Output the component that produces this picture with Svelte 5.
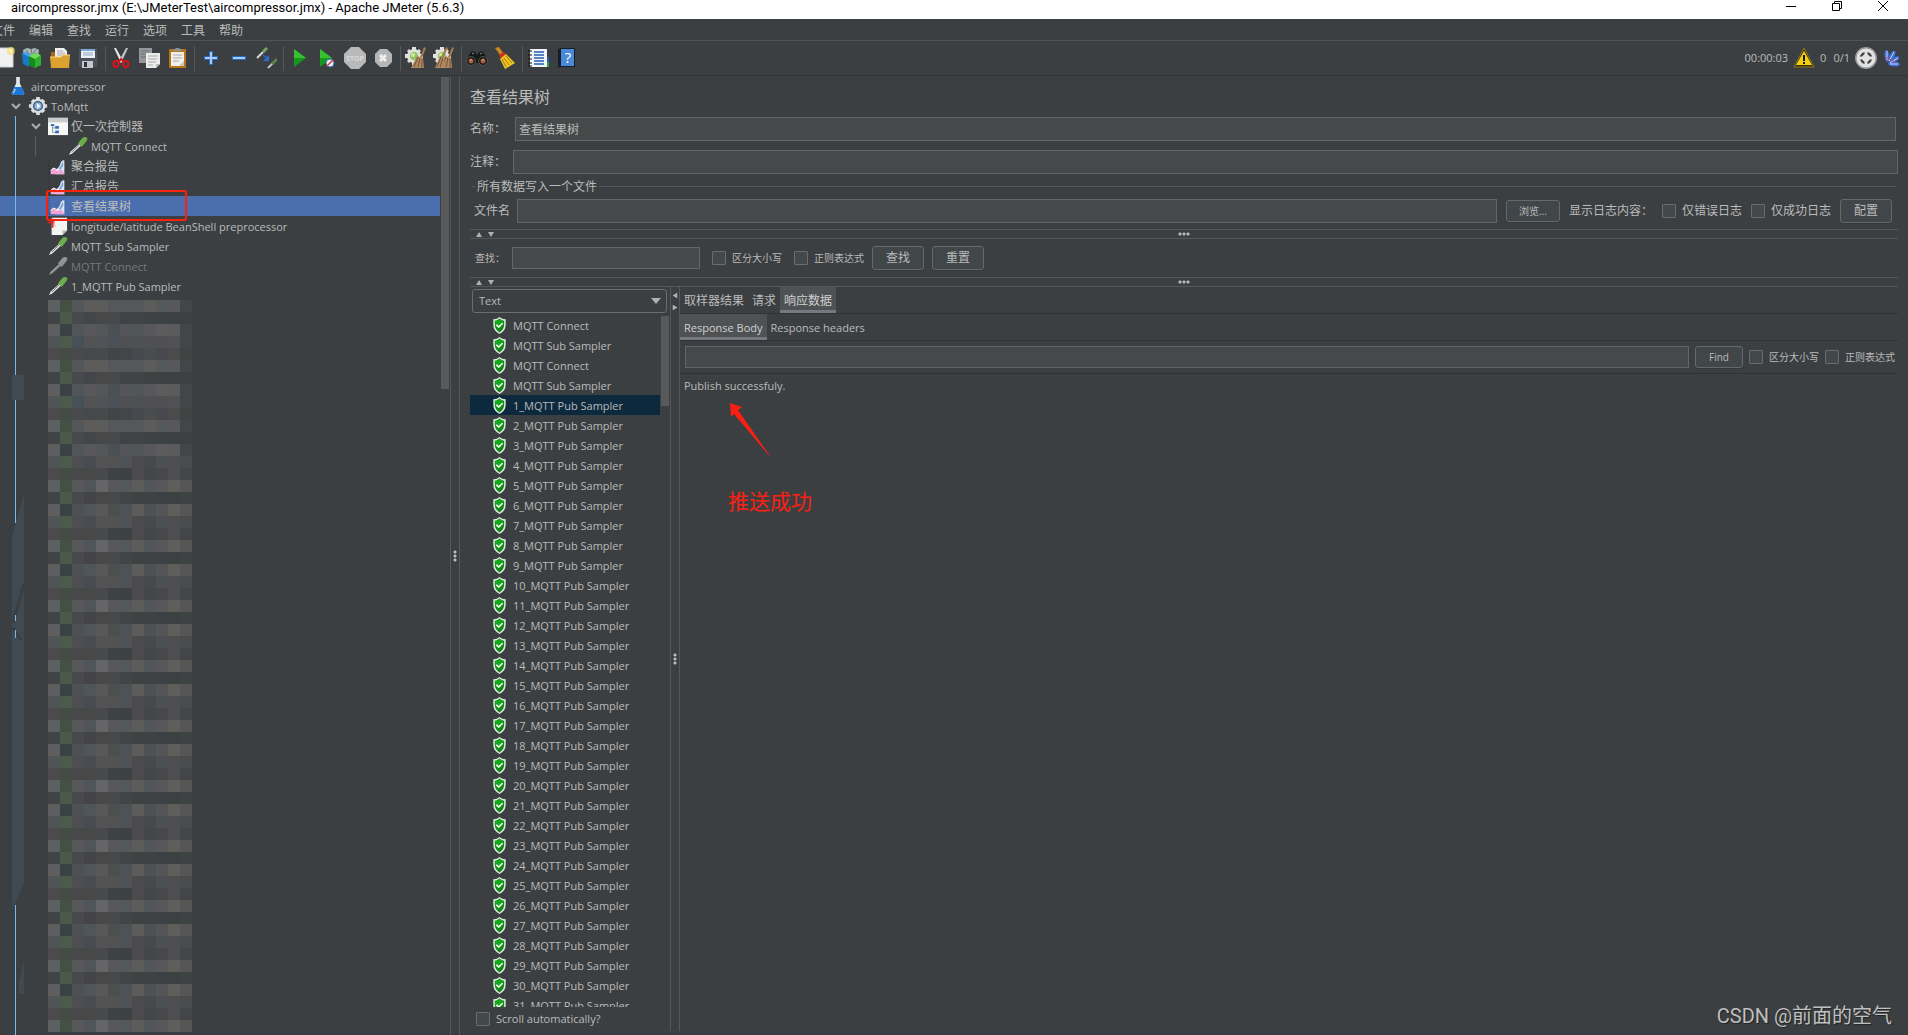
<script lang="ts">
  type TreeNode = {
    label: string;
    icon: string;
    depth: number;
    open?: boolean;
    dim?: boolean;
    zh?: boolean;
  };

  const menus = ['文件', '编辑', '查找', '运行', '选项', '工具', '帮助'];

  const toolGroups = [
    ['new', 'templates', 'open', 'save'],
    ['cut', 'copy', 'paste'],
    ['plus', 'minus', 'toggle'],
    ['start', 'startNoTimers', 'stop', 'shutdown'],
    ['clear', 'clearAll'],
    ['search', 'broom'],
    ['list', 'help']
  ];

  const tree: TreeNode[] = [
    { label: 'aircompressor', icon: 'flask', depth: 0 },
    { label: 'ToMqtt', icon: 'gear', depth: 1, open: true },
    { label: '仅一次控制器', icon: 'controller', depth: 2, open: true, zh: true },
    { label: 'MQTT Connect', icon: 'pipette', depth: 3 },
    { label: '聚合报告', icon: 'chart', depth: 2, zh: true },
    { label: '汇总报告', icon: 'chart', depth: 2, zh: true },
    { label: '查看结果树', icon: 'chart', depth: 2, zh: true },
    { label: 'longitude/latitude BeanShell preprocessor', icon: 'pre', depth: 2 },
    { label: 'MQTT Sub Sampler', icon: 'pipette', depth: 2 },
    { label: 'MQTT Connect', icon: 'pipetteOff', depth: 2, dim: true },
    { label: '1_MQTT Pub Sampler', icon: 'pipette', depth: 2 }
  ];

  const results = [
    'MQTT Connect',
    'MQTT Sub Sampler',
    'MQTT Connect',
    'MQTT Sub Sampler',
    ...Array.from({ length: 31 }, (_, i) => `${i + 1}_MQTT Pub Sampler`)
  ];

  // hidden tree rows, five mosaic lines per three rows
  const mosaicTop = [
    '5d6061 455045 53575a 5e5c5b 5c5d5a 54585a 565759 54585a 5c5d5a 56595a 58585b 434648',
    '414445 4b584a 464a4d 434548 494849 464a4c 3f4346 404445 3f4243 3d4143 3c4040 3c4041',
    '5e5e60 3b4243 50555a 58585a 54565a 4b5054 54555a 505557 58585a 5c5c5e 5b5b5c 434648',
    '515455 4b5a4a 485057 535355 515356 4b5157 4e5052 4d5152 4e5051 505052 515154 434648',
    '4b4b4d 444a44 484a4b 46494c 47494b 414546 444548 46494d 4b4c4e 48494c 4b4b4c 3f4344'
  ];
  const mosaicRest = [
    '5d6061 455045 58585a 505559 646567 58585b 54585b 5c5d5a 50565a 58585b 5e5e5b 565657',
    '414445 4b584a 464a4d 444446 494849 464a4c 414546 3e4242 3f4243 3d4143 3c4040 3e4242',
    '5e5e60 3b4243 4d5153 50555a 58585a 4b504f 4d5254 5c5d5a 4d5153 555558 5e5e5b 565657',
    '515455 4b5a4a 4e4e50 484c50 535355 525253 4e5254 4b4b4d 464a4d 4d5052 4e4e50 494c4d',
    '4b4b4d 444a44 46484a 484849 47494c 3e4243 3c4143 4b4b4d 444749 48484a 4e4e50 434648'
  ];
  const mosaic = Array.from({ length: 61 }, (_, r) =>
    (r < 13 ? mosaicTop : mosaicRest)[r % 5].split(' ')
  );

  let selectedNode = $state(6);
  let selectedResult = $state(4);
  let tab = $state('响应数据');
  let subTab = $state('Response Body');
</script>

{#snippet icon(name: string)}
  <svg class="icon" viewBox="0 0 22 22" aria-hidden="true">
    {#if name === 'new'}
      <path d="M3 1h17v19H3z" fill="#f1f1f1" stroke="#cfcfcf" />
      <circle cx="18" cy="4" r="4" fill="#f2dc5a" opacity=".6" />
      <circle cx="18" cy="4" r="2" fill="#fff6a8" />
    {:else if name === 'templates'}
      <path d="M2 3l4-2 4 1 4-1 4 2-1 7H3z" fill="#aab5b9" />
      <path d="M5 3l3 4M10 2l1 5M15 2l-3 5" stroke="#667276" />
      <path d="M1 6l7 3v11l-6-3z" fill="#1878c8" />
      <path d="M1 6l4-1 6 3-3 2z" fill="#48a2e8" />
      <path d="M8 9l7-3 5 3v9l-6 3-6-3z" fill="#2db22d" />
      <path d="M8 9l6 3v9l-6-3z" fill="#168a20" />
      <path d="M8 9l6-3 6 2-6 4z" fill="#72db5a" />
    {:else if name === 'open'}
      <path d="M2 5h6l2 2h9v12H2z" fill="#a56b14" />
      <path d="M6 1h9l3 3v9H6z" fill="#f0f0f0" />
      <path d="M8 4h6M8 6h8M8 8h8" stroke="#aaa" />
      <path d="M1 10h11l2-2h7l-1 13H2z" fill="#dca231" />
      <path d="M1 10h11l2-2h7" stroke="#f9cf70" fill="none" />
    {:else if name === 'save'}
      <path d="M2 1h18l1 1v18l-1 1H3l-2-2V2z" fill="#4b5158" stroke="#343a40" />
      <path d="M4 2h14v9H4z" fill="#e8f0f8" />
      <path d="M4 2h14v2H4z" fill="#7ea9d6" />
      <path d="M6 6h10M6 8h10" stroke="#9ab" />
      <path d="M5 14h11v7H5z" fill="#c5c9cc" />
      <path d="M7 15h3v5H7z" fill="#30343a" />
    {:else if name === 'cut'}
      <path d="M4 1l2 0 7 13-2 2z" fill="#e8e8e8" />
      <path d="M18 1l-2 0-7 13 2 2z" fill="#c7c7c7" />
      <g fill="none" stroke="#d8141c" stroke-width="2">
        <ellipse cx="6" cy="17" rx="2.6" ry="3" />
        <ellipse cx="16" cy="17" rx="2.6" ry="3" />
        <path d="M8 15l3-3 3 3" />
      </g>
    {:else if name === 'copy'}
      <path d="M1 1h13v15H1z" fill="#949799" />
      <path d="M3 4h8M3 7h5M3 10h5" stroke="#6d7072" />
      <path d="M8 6h14v11l-4 4H8z" fill="#ececea" />
      <path d="M10 9h10M10 12h9M10 15h8M10 18h5" stroke="#a9a9a9" />
      <path d="M22 17h-4v4z" fill="#b9b9b9" />
    {:else if name === 'paste'}
      <rect x="3" y="2" width="17" height="19" rx="1" fill="#b87416" />
      <path d="M5 5h13v14H5z" fill="#f0f0ee" />
      <path d="M7 4h9V2h-2l-1-1h-3L9 2H7z" fill="#8e9193" />
      <path d="M7 8h9M7 11h9M7 14h6" stroke="#aaa" />
      <path d="M18 14l-5 5h5z" fill="#c4c4c0" />
    {:else if name === 'plus'}
      <path d="M10 4h4v5h5v4h-5v5h-4v-5H5V9h5z" fill="#2b67b8" />
      <path d="M11 5h2v5h5v2h-5v5h-2v-5H6v-2h5z" fill="#a9cdf5" />
    {:else if name === 'minus'}
      <path d="M5 9h14v4H5z" fill="#2b67b8" />
      <path d="M6 10h12v2H6z" fill="#a9cdf5" />
    {:else if name === 'toggle'}
      <path d="M2 11l6-6" stroke="#d9d9d9" stroke-width="2" />
      <path d="M8 5l4-4" stroke="#70a758" stroke-width="3" />
      <path d="M13 21l5-5" stroke="#c3c3c3" stroke-width="2" />
      <path d="M17 17l5-5" stroke="#5c8249" stroke-width="3" />
      <path d="M8 8l5 4" stroke="#2a6cd8" stroke-width="1.5" />
      <path d="M14 8v6H8z" fill="#2a6cd8" />
    {:else if name === 'start'}
      <path d="M6 2l12 9-12 9z" fill="#14991b" />
      <path d="M6 2l12 9H6z" fill="#38bf32" />
    {:else if name === 'startNoTimers'}
      <path d="M4 2l12 9-12 9z" fill="#14991b" />
      <path d="M4 2l12 9H4z" fill="#38bf32" />
      <circle cx="14" cy="16" r="4" fill="#e9eef5" stroke="#3473c0" />
      <path d="M11 19l6-6" stroke="#d83228" stroke-width="1.5" />
    {:else if name === 'stop'}
      <path d="M7 0h8l7 7v8l-7 7H7l-7-7V7z" fill="#b9b9b9" />
      <text x="11" y="14" text-anchor="middle" font-size="7" font-weight="700" fill="#dadada">STOP</text>
    {:else if name === 'shutdown'}
      <path d="M8 2h7l5 5v8l-5 5H8l-5-5V7z" fill="#b6b6b6" />
      <path d="M8 8l6 6M14 8l-6 6" stroke="#eee" stroke-width="3" />
    {:else if name === 'clear' || name === 'clearAll'}
      <g fill="#dfe1df">
        <circle cx="9" cy="9" r="7" />
        <path d="M7 0h4v18H7zM0 7h18v4H0zM2 4l2-2 12 12-2 2zM14 2l2 2L4 16l-2-2z" />
      </g>
      <circle cx="9" cy="9" r="4" fill="#8fc35e" />
      <circle cx="8" cy="8" r="2" fill="#c9eb9c" />
      <path d="M19 0l2 1-4 10-2-1z" fill="#a37850" />
      <path d="M12 9l6 2 1 10H6z" fill="#b28b62" />
      <path d="M13 10l-4 10M15 11l-2 9M17 12v9" stroke="#755234" />
      {#if name === 'clearAll'}
        <path d="M13 0l2 1-5 10-2-1z" fill="#a37850" />
        <path d="M7 9l5 2-2 10H2z" fill="#b28b62" />
        <path d="M8 10l-4 10M10 11l-3 9" stroke="#755234" />
      {/if}
    {:else if name === 'search'}
      <path d="M3 8l3-4 4 2 1 3 1-3 4-2 3 4 3 8H0z" fill="#171717" />
      <circle cx="5" cy="14" r="4.5" fill="#1b1b1b" stroke="#555" />
      <circle cx="17" cy="14" r="4.5" fill="#1b1b1b" stroke="#555" />
      <circle cx="5" cy="14" r="2.5" fill="#a65b39" />
      <circle cx="17" cy="14" r="2.5" fill="#a65b39" />
      <path d="M4 13h2M16 13h2" stroke="#e9b490" />
      <path d="M6 6l2 1M16 6l-2 1" stroke="#999" />
    {:else if name === 'broom'}
      <path d="M1 1l4-1 4 6-3 2z" fill="#c98622" />
      <path d="M5 8l5-3 2 3-5 4z" fill="#d52c1d" />
      <path d="M6 12l6-5 9 9-10 6z" fill="#edc523" />
      <path d="M8 12l4 8M10 11l5 7M12 9l6 7" stroke="#a87a0c" />
    {:else if name === 'list'}
      <path d="M3 2h17v18H3z" fill="#f1f4f8" />
      <path d="M7 5h10M7 8h10M7 11h10M7 14h10M7 17h10" stroke="#245cb0" stroke-width="1.5" />
      <path d="M1 4h4M1 8h4M1 12h4M1 16h4M1 19h4" stroke="#111" />
      <path d="M20 10h2v5h-2z" fill="#2157b8" />
      <path d="M20 15h2v5h-2z" fill="#25a834" />
    {:else if name === 'help'}
      <path d="M3 2l3-1h14v19H5l-2 1z" fill="#161c28" />
      <path d="M6 2h13v17H6z" fill="#4a88d8" />
      <text x="13" y="16" text-anchor="middle" font-size="15" fill="#fff">?</text>
    {:else if name === 'warning'}
      <path d="M11 1l10 19H1z" fill="#3b3410" stroke="#8c7a18" />
      <path d="M11 4l8 14H3z" fill="#f5cd12" />
      <path d="M10 8h2v6h-2zM10 15h2v2h-2z" fill="#191919" />
    {:else if name === 'threads'}
      <circle cx="11" cy="11" r="11" fill="#999" />
      <circle cx="11" cy="11" r="9.5" fill="#e2e2e2" />
      <circle cx="11" cy="11" r="5" fill="none" stroke="#444" stroke-width="2.5" />
      <path d="M11 4v14M4 11h14" stroke="#e2e2e2" stroke-width="3" />
    {:else if name === 'feather'}
      <g fill="#3f6fd6">
        <ellipse cx="5" cy="9" rx="2.5" ry="6" transform="rotate(-8 5 9)" />
        <ellipse cx="10" cy="9" rx="2.5" ry="6" transform="rotate(28 10 9)" />
        <ellipse cx="12" cy="13" rx="2.5" ry="6" transform="rotate(58 12 13)" />
        <ellipse cx="12" cy="17" rx="2.5" ry="6" transform="rotate(95 12 17)" />
      </g>
      <path d="M5 4v9M12 5l-5 9M16 11l-8 5M16 17H8" stroke="#c9d8f7" fill="none" />
      <path d="M3 11h3l4 2 2 3" stroke="#cf4058" fill="none" />
    {:else if name === 'flask'}
      <path d="M9 1h4v7l5 11q0 2-2 2H6q-2 0-2-2L9 8z" fill="#dfe7ee" />
      <path d="M7 12h8l3 7q0 2-2 2H6q-2 0-2-2z" fill="#1c76d4" />
      <path d="M8 14l-2 5" stroke="#9fd0ff" stroke-width="1.5" />
    {:else if name === 'gear'}
      <g fill="#dcdedf">
        <circle cx="11" cy="11" r="8" />
        <path d="M9 1h4v20H9zM1 9h20v4H1zM3 6l3-3 13 13-3 3zM16 3l3 3L6 19l-3-3z" />
      </g>
      <circle cx="11" cy="11" r="5.5" fill="#34557f" />
      <circle cx="11" cy="11" r="4" fill="#8cb2da" />
      <path d="M10 8l4 3-4 3z" fill="#f7fbff" />
    {:else if name === 'controller'}
      <path d="M0 2h22v19H0z" fill="#f7f7f7" />
      <path d="M0 2h22v5H0z" fill="#c9cbcd" />
      <path d="M5 9v9h4M5 13h4" stroke="#8593a0" fill="none" />
      <path d="M3 9h4v2H3zM8 11h4v3H8zM8 16h4v3H8z" fill="#2e70b8" />
    {:else if name === 'pipette' || name === 'pipetteOff'}
      <path d="M1 21l2-4 10-9 2 2-10 9z" fill={name === 'pipette' ? '#e4e6e4' : '#8c8e8e'} />
      <path d="M4 18l8-8" stroke={name === 'pipette' ? '#77807a' : '#a0a2a2'} />
      <path d="M11 8l5-6q3-2 5 0 1 2-1 4l-5 6z" fill={name === 'pipette' ? '#6aae4c' : '#929494'} />
    {:else if name === 'chart'}
      <path d="M1 2v18h17" stroke="#2b2d2e" fill="none" stroke-dasharray="1 2" />
      <path d="M8 15q5-2 6-8 2-3 4-2v15H8z" fill="#d9e6f7" />
      <path d="M12 14q3-4 4-8l1 4-3 5z" fill="#7fa5d6" />
      <path d="M3 20v-4q3-5 5-2 2 3 4 1 4-1 6 5z" fill="#f0a5d4" />
      <path d="M3 16q3-4 5-2 2 3 4 1" stroke="#fff" fill="none" />
    {:else if name === 'pre'}
      <path d="M4 2h17v14l-5 5H4z" fill="#f3f3f1" />
      <path d="M21 16h-5v5z" fill="#b9b9b5" />
      <path d="M0 7h7M5 3v10" stroke="#e01f26" stroke-width="2" />
      <path d="M8 4q-3 3 0 8" stroke="#f0a7a7" fill="none" />
    {:else if name === 'shield'}
      <path d="M11 0q3 3 8 3v7q0 8-8 12-8-4-8-12V3q5 0 8-3z" fill="#dfe6df" />
      <path d="M11 2q3 3 6 3v5q0 6-6 10-6-4-6-10V5q3 0 6-3z" fill="#0e8a14" />
      <path d="M11 3q3 2 5 3v3L6 14q-1-3-1-8 3 0 6-3z" fill="#12a91a" />
      <path d="M7 10l3 3 5-5" stroke="#fff" stroke-width="2" fill="none" />
    {/if}
  </svg>
{/snippet}

{#snippet arrows()}
  <span class="arrows">
    <svg viewBox="0 0 6 5" aria-hidden="true"><path d="M0 5l3-5 3 5z" fill="#afb1b3" /></svg>
    <svg viewBox="0 0 6 5" aria-hidden="true"><path d="M0 0h6L3 5z" fill="#afb1b3" /></svg>
  </span>
{/snippet}

{#snippet check(label: string)}
  <label class="check"><input type="checkbox" />{label}</label>
{/snippet}

<div class="app">
  <div class="titlebar">
    <span class="caption">aircompressor.jmx (E:\JMeterTest\aircompressor.jmx) - Apache JMeter (5.6.3)</span>
    <div class="window-buttons">
      <button aria-label="Minimize"><svg viewBox="0 0 10 10"><path d="M0 5.5h10" /></svg></button>
      <button aria-label="Restore"><svg viewBox="0 0 10 10"><path d="M.5 2.5h7v7h-7zM2.5 2.5v-2h7v7h-2" /></svg></button>
      <button aria-label="Close"><svg viewBox="0 0 10 10"><path d="M0 0l10 10M10 0L0 10" /></svg></button>
    </div>
  </div>

  <nav class="menubar">
    {#each menus as m}<button>{m}</button>{/each}
  </nav>

  <div class="toolbar">
    <div class="tools">
      {#each toolGroups as group, g}
        {#if g > 0}<span class="sep"></span>{/if}
        {#each group as name}
          <button aria-label={name}>{@render icon(name)}</button>
        {/each}
      {/each}
    </div>
    <div class="status">
      <span>00:00:03</span>
      {@render icon('warning')}
      <span>0</span>
      <span class="threads">0/1</span>
      {@render icon('threads')}
      {@render icon('feather')}
    </div>
  </div>

  <div class="main">
    <aside class="tree">
      <ul>
        {#each tree as node, i}
          <li>
            <button
              class="node depth-{node.depth}"
              class:selected={i === selectedNode}
              class:dim={node.dim}
              class:zh={node.zh}
              onclick={() => (selectedNode = i)}
            >
              {#if node.open}
                <svg class="chevron" viewBox="0 0 10 7" aria-hidden="true"><path d="M1 1l4 4 4-4" /></svg>
              {/if}
              {@render icon(node.icon)}
              <span>{node.label}</span>
            </button>
          </li>
        {/each}
      </ul>
      <svg class="mosaic" viewBox="0 0 144 732" shape-rendering="crispEdges" aria-hidden="true">
        {#each mosaic as row, r}
          {#each row as color, c}
            <rect x={c * 12} y={r * 12} width="12" height="12" fill="#{color}" />
          {/each}
        {/each}
      </svg>
      <svg class="guides" aria-hidden="true">
        <path d="M12 299h12v25H12zM24 418v389L12 834V460z" fill="#404a52" />
        <path d="M24 508L13 547M13 552l8 12" stroke="#3c3f41" stroke-width="3" />
        <path d="M24 885v33h-5v-12z" fill="#404a52" />
        <path d="M15.5 40v259M15.5 324v123M15.5 539v6M15.5 554v8M15.5 829v131" stroke="#7ab8f0" />
        <path d="M35.5 60v20" stroke="#5d6062" />
      </svg>
      <span class="mark"></span>
      <span class="thumb"></span>
    </aside>

    <div class="vsplit"><span class="grip"></span></div>

    <section class="panel">
      <h1>查看结果树</h1>
      <div class="row name">
        <label for="name">名称：</label>
        <input id="name" type="text" value="查看结果树" />
      </div>
      <div class="row comment">
        <label for="comment">注释：</label>
        <input id="comment" type="text" />
      </div>

      <fieldset>
        <legend>所有数据写入一个文件</legend>
        <div class="row file">
          <label class="field-label" for="file">文件名</label>
          <input id="file" type="text" />
          <button class="btn small">浏览...</button>
          <span>显示日志内容：</span>
          {@render check('仅错误日志')}
          {@render check('仅成功日志')}
          <button class="btn">配置</button>
        </div>
      </fieldset>

      <div class="hsplit">{@render arrows()}<span class="grip"></span></div>

      <div class="row search">
        <label class="field-label" for="find">查找：</label>
        <input id="find" type="text" />
        {@render check('区分大小写')}
        {@render check('正则表达式')}
        <button class="btn">查找</button>
        <button class="btn">重置</button>
      </div>

      <div class="hsplit">{@render arrows()}<span class="grip"></span></div>

      <div class="results">
        <div class="samples">
          <div class="combo">
            <select aria-label="Renderer"><option>Text</option></select>
            <svg viewBox="0 0 10 6" aria-hidden="true"><path d="M0 0h10L5 6z" fill="#afb1b3" /></svg>
          </div>
          <div class="list">
            <ul>
              {#each results as r, i}
                <li>
                  <button class:selected={i === selectedResult} onclick={() => (selectedResult = i)}>
                    {@render icon('shield')}<span>{r}</span>
                  </button>
                </li>
              {/each}
            </ul>
            <span class="list-thumb"></span>
          </div>
          <div class="auto">{@render check('Scroll automatically?')}</div>
        </div>

        <div class="vsplit">{@render arrows()}<span class="grip"></span></div>

        <div class="detail">
          <div class="tabs" role="tablist">
            {#each ['取样器结果', '请求', '响应数据'] as t}
              <button role="tab" aria-selected={t === tab} onclick={() => (tab = t)}>{t}</button>
            {/each}
          </div>
          <div class="tabs sub" role="tablist">
            {#each ['Response Body', 'Response headers'] as t}
              <button role="tab" aria-selected={t === subTab} onclick={() => (subTab = t)}>{t}</button>
            {/each}
          </div>
          <div class="row body-find">
            <input type="text" aria-label="Find" />
            <button class="btn small">Find</button>
            {@render check('区分大小写')}
            {@render check('正则表达式')}
          </div>
          <div class="response">
            <p>Publish successfuly.</p>
            <div class="note">
              <svg viewBox="0 0 46 58" aria-hidden="true"><path d="M2 1l12 4-4 3 34 49L6 12l-3 3z" fill="#fb1f12" /></svg>
              <span>推送成功</span>
            </div>
          </div>
        </div>
      </div>
    </section>
  </div>
  <span class="watermark">CSDN @前面的空气</span>
</div>

<style>
  :global(body) { background: #3c3f41; }
  .app {
    position: relative;
    display: flex;
    flex-direction: column;
    height: 100vh;
    overflow: hidden;
    background: #3c3f41;
    color: #bbb;
    font: 11px/20px 'Open Sans', 'Noto Sans CJK SC', sans-serif;
  }
  * { box-sizing: border-box; }
  button, input, select { font: inherit; color: inherit; margin: 0; }
  button { background: none; border: 0; padding: 0; white-space: nowrap; }
  ul { list-style: none; margin: 0; padding: 0; }
  .icon { display: block; flex: none; width: 22px; height: 22px; }

  .titlebar {
    display: flex;
    justify-content: space-between;
    flex: none;
    height: 19px;
    padding-left: 11px;
    background: #fff;
    color: #000;
    line-height: 16px;
  }
  .caption { font-family: Roboto, 'Open Sans', sans-serif; font-size: 13px; }
  .window-buttons { display: flex; margin-right: 2px; }
  .window-buttons button { display: flex; justify-content: center; width: 46px; padding-top: 1px; }
  .window-buttons svg { width: 10px; height: 10px; fill: none; stroke: #000; overflow: visible; }

  .menubar {
    display: flex;
    flex: none;
    height: 22px;
    margin-left: -16px;
    border-bottom: 1px solid #515355;
    font-size: 12px;
  }
  .menubar button { padding: 2px 7px 0; }

  .toolbar {
    display: flex;
    justify-content: space-between;
    align-items: center;
    flex: none;
    height: 35px;
    border-bottom: 1px solid #323232;
  }
  .tools { display: flex; align-items: center; margin-left: -10px; }
  .tools button { padding: 0 3px; }
  .sep { width: 1px; height: 25px; margin: 0 1px 0 3px; background: #555759; }
  .status { display: flex; align-items: center; gap: 5px; padding-right: 4px; }
  .threads { margin-left: 2px; }

  .main { display: flex; flex: 1; min-height: 0; }
  .tree { position: relative; flex: none; width: 450px; overflow: hidden; }
  .node { display: flex; align-items: center; gap: 3px; width: 440px; height: 20px; }
  .node .icon { width: 20px; height: 20px; }
  .node span { padding-top: 2px; }
  .depth-0 { padding-left: 8px; }
  .depth-1 { padding-left: 28px; }
  .depth-2 { padding-left: 48px; }
  .depth-3 { padding-left: 68px; }
  .chevron { width: 10px; height: 7px; margin: 0 4px 0 -17px; fill: none; stroke: #adadad; stroke-width: 2; }
  .node.selected { background: #4b6eaf; }
  .node.dim { color: #777; }
  .node.zh { font-size: 12px; }
  .mosaic { display: block; width: 144px; height: 732px; margin: 4px 0 0 48px; }
  .guides { position: absolute; top: 0; left: 0; width: 40px; height: 100%; }
  .mark {
    position: absolute;
    top: 114px;
    left: 46px;
    width: 141px;
    height: 31px;
    border: 2px solid #f8230f;
    border-radius: 3px;
  }
  .thumb { position: absolute; top: 1px; right: 1px; width: 8px; height: 312px; background: #58595a; }

  .vsplit {
    position: relative;
    display: flex;
    flex: none;
    align-items: center;
    justify-content: center;
    width: 10px;
    border: solid #555759;
    border-width: 0 1px;
  }
  .hsplit {
    position: relative;
    display: flex;
    flex: none;
    align-items: center;
    justify-content: center;
    height: 10px;
    border: solid #555759;
    border-width: 1px 0;
  }
  .grip { width: 12px; height: 4px; background: radial-gradient(circle at center, #bbb 1px, transparent 2px) 0 0 / 4px 4px; }
  .vsplit .grip { width: 4px; height: 12px; }
  .arrows { position: absolute; display: flex; gap: 6px; }
  .arrows svg { width: 6px; height: 5px; }
  .hsplit .arrows { left: 6px; }
  .vsplit .arrows { top: 6px; flex-direction: column; gap: 7px; }
  .vsplit .arrows svg { transform: rotate(-90deg); }

  .panel { display: flex; flex: 1; flex-direction: column; min-width: 0; padding: 0 10px 4px; }
  h1 { margin: 0; padding-top: 2px; font-size: 16px; font-weight: 400; line-height: 39px; }
  .row { display: flex; align-items: center; font-size: 12px; }
  .row > input { flex: 1; min-width: 0; }
  input[type='text'] {
    height: 24px;
    padding: 0 3px;
    background: #45494a;
    border: 1px solid #646666;
    border-radius: 0;
    outline: none;
  }
  .name label, .comment label { flex: none; width: 43px; }
  .name { margin-bottom: 9px; }
  .name input { margin: 0 2px; }
  fieldset { min-width: 0; margin: 0 2px 6px; padding: 0; border: 0 solid #555759; border-top-width: 1px; }
  legend { margin-left: 3px; padding: 0 2px; font-size: 12px; line-height: 25px; }
  .field-label { flex: none; white-space: nowrap; }
  .file { gap: 9px; padding: 0 4px 0 2px; }
  .file .field-label { width: 34px; }
  .btn {
    flex: none;
    width: 52px;
    height: 24px;
    background: #414749;
    border: 1px solid #66696a;
    border-radius: 3px;
    box-shadow: 0 1px 0 #353738;
    line-height: 20px;
  }
  .btn.small { height: 22px; font-size: 10px; line-height: 18px; }
  .file .btn.small { width: 54px; }
  .check { display: flex; flex: none; align-items: center; gap: 6px; white-space: nowrap; }
  input[type='checkbox'] {
    appearance: none;
    flex: none;
    width: 14px;
    height: 14px;
    background: #43494a;
    border: 1px solid #6b6b6b;
    border-radius: 1px;
  }
  .search { flex: none; gap: 8px; height: 38px; padding-left: 5px; }
  .search .field-label { width: 29px; font-size: 10px; }
  .search .check { margin-left: 4px; font-size: 10px; }
  .search input[type='text'] { flex: none; width: 188px; height: 22px; }

  .results { display: flex; flex: 1; min-height: 0; }
  .samples { display: flex; flex: none; flex-direction: column; width: 200px; }
  .combo { display: flex; align-items: center; flex: none; width: 195px; margin: 2px 0 2px 2px; }
  .combo select {
    appearance: none;
    flex: 1;
    height: 24px;
    padding: 0 6px;
    background: #3c3f41;
    border: 1px solid #6b6d6e;
    border-radius: 3px;
  }
  .combo svg { width: 10px; height: 6px; margin: 0 6px 0 -16px; }
  .list { display: flex; flex: 1; gap: 1px; min-height: 0; overflow: hidden; }
  .list ul { flex: none; width: 190px; }
  .list button { display: flex; align-items: center; gap: 4px; width: 100%; height: 20px; padding-left: 20px; }
  .list button span { padding-top: 2px; }
  .list .icon { width: 19px; height: 17px; }
  .list .selected { background: #0d293e; }
  .list-thumb { width: 8px; height: 90px; margin-top: 1px; background: #58595a; }
  .auto { display: flex; flex: none; height: 24px; padding-left: 6px; }

  .detail { display: flex; flex: 1; flex-direction: column; min-width: 0; }
  .tabs { display: flex; flex: none; height: 27px; border-bottom: 1px solid #323232; font-size: 12px; }
  .tabs button { padding: 4px 4px 0; border-bottom: 3px solid transparent; }
  .tabs [aria-selected='true'] { background: #4e5254; border-color: #747a80; color: #d0d0d0; }
  .tabs.sub { font-size: 11px; }
  .body-find { flex: none; height: 33px; gap: 6px; padding: 0 3px 0 5px; border-bottom: 1px solid #323232; }
  .body-find input[type='text'] { height: 22px; }
  .body-find .btn { width: 48px; }
  .body-find .check { font-size: 10px; }
  .response { padding: 2px 4px; }
  .response p { margin: 0; }
  .note { width: 100px; padding: 6px 0 0 44px; color: #fb1f12; font-size: 21px; line-height: 30px; }
  .note svg { display: block; width: 46px; height: 58px; margin-bottom: 26px; }
  .note span { white-space: nowrap; }
  .watermark {
    position: absolute;
    right: 16px;
    bottom: 5px;
    color: #bfc0c1;
    font: 20px/28px Roboto, 'Noto Sans CJK SC', sans-serif;
    text-shadow: 1px 1px 1px #222;
  }
</style>
